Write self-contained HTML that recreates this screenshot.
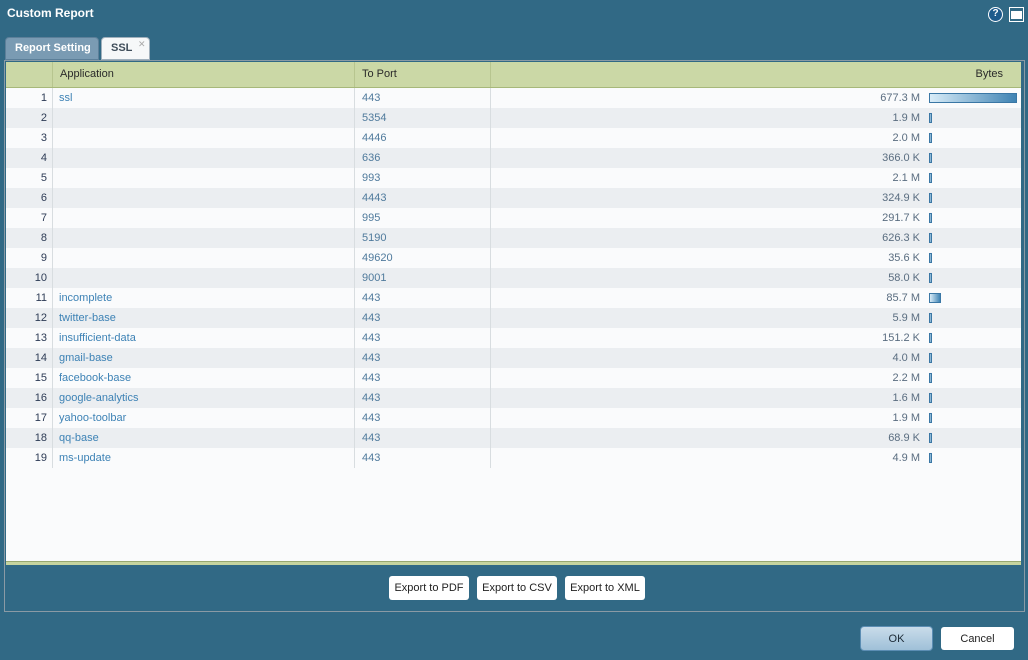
<!DOCTYPE html>
<html><head><meta charset="utf-8"><style>
*{box-sizing:border-box;margin:0;padding:0}
body{width:1028px;height:660px;background:#316985;font-family:"Liberation Sans",Arial,sans-serif;font-size:11px;position:relative;overflow:hidden}
.title{position:absolute;left:7px;top:6px;color:#fff;font-weight:bold;font-size:12px}
.help{position:absolute;left:988px;top:7px;width:15px;height:15px;border-radius:50%;background:#1d5a8c;border:1.5px solid #fff;color:#fff;font-weight:bold;font-size:10px;text-align:center;line-height:12px}
.max{position:absolute;left:1009px;top:7px;width:15px;height:15px;border:1.5px solid #fff;background:#316985}
.max:after{content:"";position:absolute;left:1px;top:3px;right:1px;bottom:2px;background:#fff}
.tab{position:absolute;top:37px;height:23px;border-radius:4px 4px 0 0;font-weight:bold;font-size:11px;padding-top:4px}
.t1{left:5px;width:94px;background:#7a9bb3;color:#fff;padding-left:9px;border:1px solid #5c7f99}
.t2{left:101px;width:49px;background:#f6f8f9;color:#3f4d5a;padding-left:9px;border:1px solid #a0b0bc}
.t2 span{position:absolute;left:36px;top:1px;color:#aaa;font-size:9px;font-weight:normal}
.panel{position:absolute;left:4px;top:60px;width:1021px;height:552px;border:1px solid #8a9aa5}
.tbl{position:absolute;left:6px;top:62px;width:1015px;height:500px;background:#fafbfc}
.hdr{position:absolute;left:0;top:0;width:1015px;height:26px;background:#cbd8a6;border-bottom:1px solid #a7b87a;color:#2a2a2a;font-size:11px}
.hdr div{position:absolute;top:0;height:25px;line-height:25px;border-left:1px solid #b7c58f}
.row{position:absolute;left:0;width:1015px;height:20px;line-height:21px}
.row:nth-child(even){background:#ebeef1}
.c{position:absolute;top:0;height:20px}
.n{left:0;width:41px;text-align:right;color:#2d3b55}
.a{left:46px;width:302px;padding-left:6px;color:#3d82b5;border-left:1px solid #d8dde0}
.p{left:348px;width:136px;padding-left:7px;color:#4f7a9c;border-left:1px solid #d8dde0}
.b{left:484px;width:430px;text-align:right;color:#5a6d80;border-left:1px solid #d8dde0}
.bar{position:absolute;top:5px;left:923px;height:10px;border:1px solid #3a77a5;background:linear-gradient(90deg,#d8ecf8,#3f83b3)}
.green{position:absolute;left:6px;top:561px;width:1015px;height:4px;background:#c6d49f;border-top:1px solid #98a870}
.btn{position:absolute;top:576px;height:24px;background:#fff;border-radius:3px;color:#222;font-size:11px;text-align:center;line-height:25px}
.ok{position:absolute;left:860px;top:626px;width:73px;height:25px;border-radius:4px;border:1px solid #5b8db3;background:linear-gradient(#c9dcea,#9fc0d8);text-align:center;line-height:24px;color:#1c2a36}
.cancel{position:absolute;left:941px;top:627px;width:73px;height:23px;background:#fff;border-radius:3px;text-align:center;line-height:24px;color:#222}
</style></head><body>
<div class="title">Custom Report</div>
<div class="help">?</div><div class="max"></div>
<div class="tab t1">Report Setting</div>
<div class="tab t2">SSL<span>✕</span></div>
<div class="panel"></div>
<div class="tbl">
<div class="hdr"><div style="left:0;width:46px;border:none"></div><div style="left:46px;width:302px;padding-left:7px">Application</div><div style="left:348px;width:136px;padding-left:7px">To Port</div><div style="left:484px;width:530px;text-align:right;padding-right:17px">Bytes</div></div>
<div style="position:absolute;left:0;top:26px;width:1015px">
<div class="row" style="top:0"><div class="c n">1</div><div class="c a">ssl</div><div class="c p">443</div><div class="c b">677.3 M</div><div class="bar" style="width:88px"></div></div>
<div class="row" style="top:20px"><div class="c n">2</div><div class="c a"></div><div class="c p">5354</div><div class="c b">1.9 M</div><div class="bar" style="width:3px"></div></div>
<div class="row" style="top:40px"><div class="c n">3</div><div class="c a"></div><div class="c p">4446</div><div class="c b">2.0 M</div><div class="bar" style="width:3px"></div></div>
<div class="row" style="top:60px"><div class="c n">4</div><div class="c a"></div><div class="c p">636</div><div class="c b">366.0 K</div><div class="bar" style="width:3px"></div></div>
<div class="row" style="top:80px"><div class="c n">5</div><div class="c a"></div><div class="c p">993</div><div class="c b">2.1 M</div><div class="bar" style="width:3px"></div></div>
<div class="row" style="top:100px"><div class="c n">6</div><div class="c a"></div><div class="c p">4443</div><div class="c b">324.9 K</div><div class="bar" style="width:3px"></div></div>
<div class="row" style="top:120px"><div class="c n">7</div><div class="c a"></div><div class="c p">995</div><div class="c b">291.7 K</div><div class="bar" style="width:3px"></div></div>
<div class="row" style="top:140px"><div class="c n">8</div><div class="c a"></div><div class="c p">5190</div><div class="c b">626.3 K</div><div class="bar" style="width:3px"></div></div>
<div class="row" style="top:160px"><div class="c n">9</div><div class="c a"></div><div class="c p">49620</div><div class="c b">35.6 K</div><div class="bar" style="width:3px"></div></div>
<div class="row" style="top:180px"><div class="c n">10</div><div class="c a"></div><div class="c p">9001</div><div class="c b">58.0 K</div><div class="bar" style="width:3px"></div></div>
<div class="row" style="top:200px"><div class="c n">11</div><div class="c a">incomplete</div><div class="c p">443</div><div class="c b">85.7 M</div><div class="bar" style="width:12px"></div></div>
<div class="row" style="top:220px"><div class="c n">12</div><div class="c a">twitter-base</div><div class="c p">443</div><div class="c b">5.9 M</div><div class="bar" style="width:3px"></div></div>
<div class="row" style="top:240px"><div class="c n">13</div><div class="c a">insufficient-data</div><div class="c p">443</div><div class="c b">151.2 K</div><div class="bar" style="width:3px"></div></div>
<div class="row" style="top:260px"><div class="c n">14</div><div class="c a">gmail-base</div><div class="c p">443</div><div class="c b">4.0 M</div><div class="bar" style="width:3px"></div></div>
<div class="row" style="top:280px"><div class="c n">15</div><div class="c a">facebook-base</div><div class="c p">443</div><div class="c b">2.2 M</div><div class="bar" style="width:3px"></div></div>
<div class="row" style="top:300px"><div class="c n">16</div><div class="c a">google-analytics</div><div class="c p">443</div><div class="c b">1.6 M</div><div class="bar" style="width:3px"></div></div>
<div class="row" style="top:320px"><div class="c n">17</div><div class="c a">yahoo-toolbar</div><div class="c p">443</div><div class="c b">1.9 M</div><div class="bar" style="width:3px"></div></div>
<div class="row" style="top:340px"><div class="c n">18</div><div class="c a">qq-base</div><div class="c p">443</div><div class="c b">68.9 K</div><div class="bar" style="width:3px"></div></div>
<div class="row" style="top:360px"><div class="c n">19</div><div class="c a">ms-update</div><div class="c p">443</div><div class="c b">4.9 M</div><div class="bar" style="width:3px"></div></div>
</div>
</div>
<div class="green"></div>
<div class="btn" style="left:389px;width:80px">Export to PDF</div>
<div class="btn" style="left:477px;width:80px">Export to CSV</div>
<div class="btn" style="left:565px;width:80px">Export to XML</div>
<div class="ok">OK</div>
<div class="cancel">Cancel</div>
</body></html>
